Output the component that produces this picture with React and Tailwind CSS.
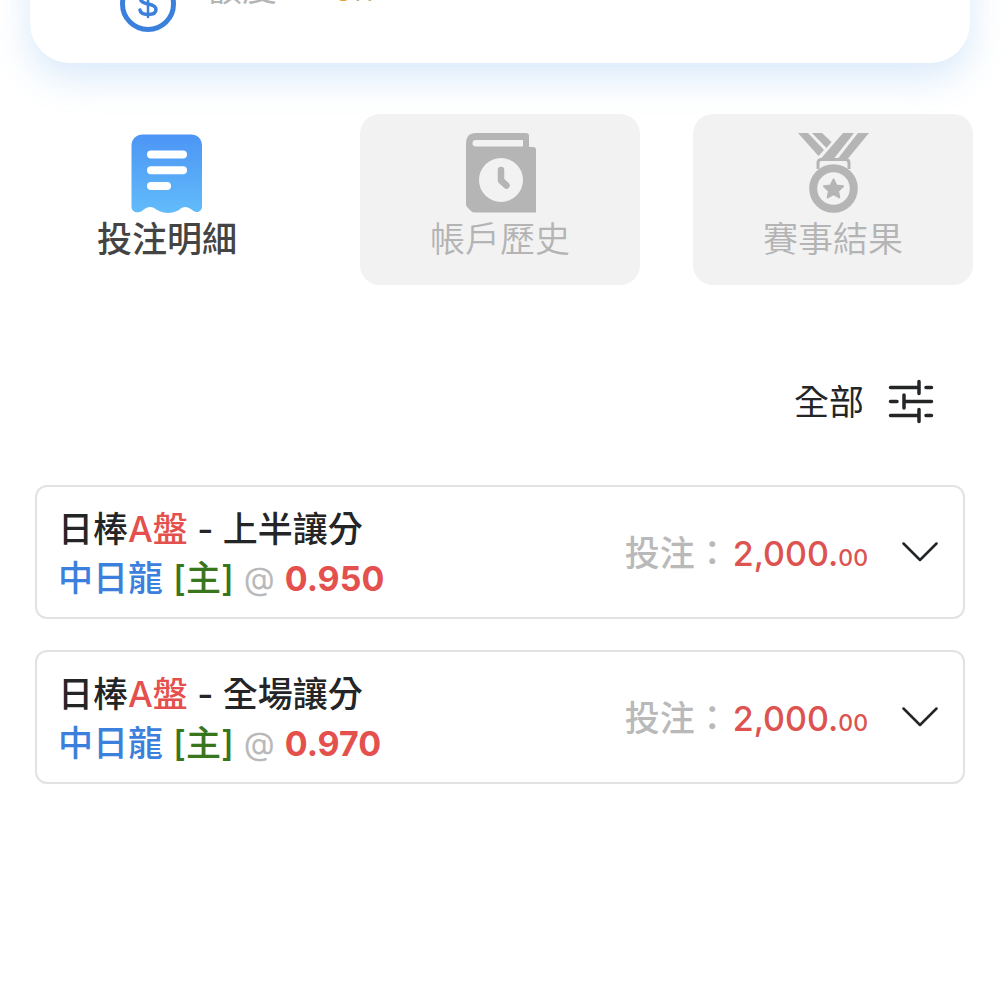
import React, { useState } from 'react';

const TABS = [
    { id: 'bets', label: '投注明細', Icon: ReceiptIcon },
    { id: 'history', label: '帳戶歷史', Icon: HistoryIcon },
    { id: 'results', label: '賽事結果', Icon: MedalIcon },
];

const BETS = [
    { id: 1, league: '日棒', market: 'A盤', play: '上半讓分', team: '中日龍', side: '[主]', odds: '0.950', amount: '2,000', cents: '00' },
    { id: 2, league: '日棒', market: 'A盤', play: '全場讓分', team: '中日龍', side: '[主]', odds: '0.970', amount: '2,000', cents: '00' },
];

export default function App() {
    const [activeTab, setActiveTab] = useState('bets');

    return (
        <div className="min-h-screen overflow-hidden bg-white font-['Inter','Noto_Sans_CJK_TC',sans-serif] text-[#232527]">
            <AccountCard />

            <nav className="mt-[51px] grid grid-cols-3 gap-[53px] px-[27px]">
                {TABS.map((tab) => (
                    <TabButton
                        key={tab.id}
                        label={tab.label}
                        Icon={tab.Icon}
                        active={tab.id === activeTab}
                        onClick={() => setActiveTab(tab.id)}
                    />
                ))}
            </nav>

            <div className="mt-[92px] flex justify-end px-[66px]">
                <button type="button" className="flex items-center gap-6 text-[35px] leading-[50px]">
                    全部
                    <FilterIcon />
                </button>
            </div>

            <main className="mt-[58px] flex flex-col gap-[31px] px-[35px]">
                {BETS.map((bet) => (
                    <BetRow key={bet.id} bet={bet} />
                ))}
            </main>
        </div>
    );
}

// The card is scrolled most of the way past the top edge
function AccountCard() {
    return (
        <section className="mx-[30px] -mt-24 rounded-[40px] bg-white px-[90px] pt-[72px] pb-[31px] shadow-[0_14px_36px_rgba(90,165,235,0.24)]">
            <div className="flex items-start gap-[31px] text-[35px] leading-[24px]">
                <DollarIcon />
                <span className="text-[#b5b5b5]">額度</span>
                <span className="ml-6 font-medium text-[#dfa32c]">0<span className="text-[20px] text-[#b9a98a]">77</span></span>
            </div>
        </section>
    );
}

function TabButton({ label, Icon, active, onClick }) {
    return (
        <button
            type="button"
            onClick={onClick}
            className={
                active
                    ? 'flex flex-col items-center rounded-[20px] bg-white pt-[19px] pb-5 text-[35px] leading-[52px] font-medium text-[#444444]'
                    : 'flex flex-col items-center rounded-[20px] bg-[#f2f2f2] pt-[19px] pb-5 text-[35px] leading-[52px] font-[350] text-[#b4b4b4]'
            }
        >
            <Icon />
            {label}
        </button>
    );
}

function BetRow({ bet }) {
    return (
        <article className="flex items-center justify-between rounded-xl border-2 border-[#e2e2e2] py-[14px] pr-[25px] pl-[21px] text-[35px] leading-[49px] font-medium">
            <div className="pt-1">
                <h2>
                    {bet.league}
                    <span className="text-[#e4504d]">{bet.market}</span>
                    {' - '}
                    {bet.play}
                </h2>
                <p className="flex gap-[10px]">
                    <span className="text-[#3c80dd]">{bet.team}</span>
                    <span className="text-[#38761d]">{bet.side}</span>
                    <span className="text-[32px] font-normal text-[#b9b9b9]">@</span>
                    <span className="text-[34px] font-bold text-[#e4504d]">{bet.odds}</span>
                </p>
            </div>
            <div className="flex items-center">
                <p className="flex gap-[3px] pt-2">
                    <span className="text-[#b9b9b9]">投注：</span>
                    <span className="text-[34px] text-[#dc5350]">
                        {bet.amount}.<span className="text-[23px]">{bet.cents}</span>
                    </span>
                </p>
                <button type="button" aria-label="展開" className="ml-[34px]">
                    <ChevronIcon />
                </button>
            </div>
        </article>
    );
}

function DollarIcon() {
    return (
        <svg width="56" height="56" viewBox="0 0 56 56" fill="none" stroke="#3c80dd" strokeLinecap="round">
            <circle cx="28" cy="28" r="25.5" strokeWidth="5" />
            <path d="M35.5 22c-.8-3-3.600-5-7.500-5s-7.500 2-7.500 5.500 3 4.700 7.500 5.500 8 2 8 5.500-3.500 5-8 5-7.500-1.500-8-4.500" strokeWidth="3.500" />
            <path d="M28 13.500v27.500" strokeWidth="2.500" />
        </svg>
    );
}

function ReceiptIcon() {
    return (
        <svg width="72" height="80" viewBox="-1 -1 72 80">
            <defs>
                <linearGradient id="receipt" x1="0" y1="0" x2="0" y2="1">
                    <stop offset="0" stopColor="#4c95f5" />
                    <stop offset="1" stopColor="#62bcfa" />
                </linearGradient>
            </defs>
            <path
                d="M11 .5h48c6.500 0 11 4.500 11 11v61c0 5-5 7-8.500 4.500-6-4.500-9.500-5.500-14.500-1-7.500 4-14.500 4-22 0-5-4.500-9.500-4-15 1C5 80-.5 77.500-.5 72.500v-61C-.5 5 4.500.5 11 .5z"
                fill="url(#receipt)"
            />
            <path d="M19 20.500h32M19 36.300h32M19 52h16" stroke="#fff" strokeWidth="8" strokeLinecap="round" />
        </svg>
    );
}

function HistoryIcon() {
    return (
        <svg width="72" height="80" viewBox="0 -1 72 80">
            <path
                fillRule="evenodd"
                d="M12-1h50q3 0 3 3v11h4q3 0 3 3v62.500H10q-2 0-3.500-2l-3-3Q2 72 2 70V10Q2-1 12-1zM12 6q-3.500 0-3.500 3.200t3.500 3.300h47V6z"
                fill="#b5b5b5"
            />
            <circle cx="37" cy="46" r="22" fill="#f2f2f2" />
            <path d="M37 36v10.500l5.500 5" fill="none" stroke="#b5b5b5" strokeWidth="6.500" strokeLinecap="round" strokeLinejoin="round" />
        </svg>
    );
}

function MedalIcon() {
    return (
        <svg width="72" height="80" viewBox="0 -1 72 80" fill="#b5b5b5">
            <path d="M1-1h10L27 16l-5.500 6zM15-1h10l9.500 9-5 6zM46-1h11L37 24.500H24zM61-1h11L51 24.500H41z" />
            <path d="M21 35v-6q0-3.500 3.500-3.500h24q3.500 0 3.500 3.500v6" fill="none" stroke="#b5b5b5" strokeWidth="3" />
            <circle cx="36.500" cy="54.500" r="20.300" fill="#f2f2f2" stroke="#b5b5b5" strokeWidth="8" />
            <path d="M36.500 45.500l2.800 6 6.700.8-5 4.600 1.300 6.600-5.800-3.300-5.800 3.300 1.300-6.600-5-4.600 6.700-.8z" stroke="#b5b5b5" strokeWidth="2" strokeLinejoin="round" />
        </svg>
    );
}

function FilterIcon() {
    return (
        <svg width="46" height="46" viewBox="0 0 46 46" fill="none" stroke="#232527" strokeWidth="3.500" strokeLinecap="round">
            <path d="M2.500 8.500H31M38 8.500h5.500M31 2.500v12M2.500 22.500H9M16 22.500h27.500M16 16v13M2.500 36.500H31M38 36.500h5.500M31 30.500v12" />
        </svg>
    );
}

function ChevronIcon() {
    return (
        <svg width="36" height="20" viewBox="0 0 36 20" fill="none" stroke="#232527" strokeWidth="2.500" strokeLinecap="round" strokeLinejoin="round">
            <path d="M1.500 1.500L18 18 34.500 1.500" />
        </svg>
    );
}
